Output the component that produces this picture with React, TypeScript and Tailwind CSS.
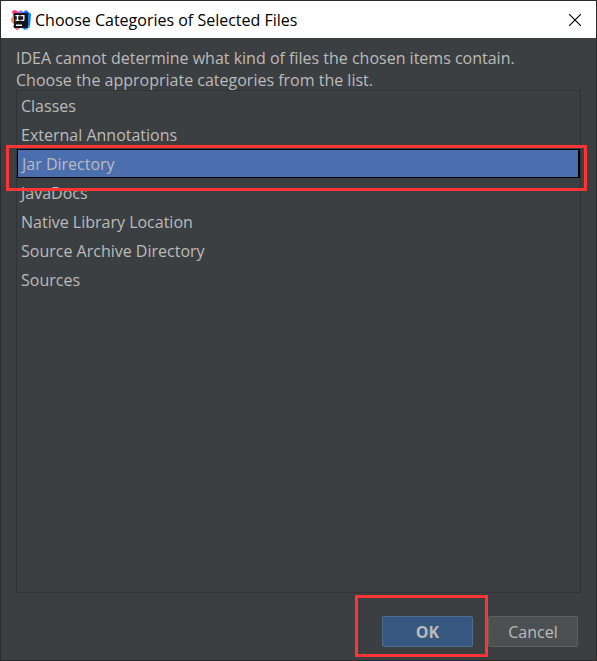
import { useState } from "react";

const categories = [
  "Classes",
  "External Annotations",
  "Jar Directory",
  "JavaDocs",
  "Native Library Location",
  "Source Archive Directory",
  "Sources",
];

function IdeaLogo() {
  return (
    <svg viewBox="0 0 20 20" className="size-5 shrink-0" aria-hidden="true">
      <path d="M1 1l3-1 6 3 1 14-5 3-4-3 1-3-3-4 2-4z" fill="#fe3d6a" />
      <path d="M0 9l3-2 1 7-3-1z" fill="#fb8a3c" />
      <path d="M2 16l3-1 5 2-4 3z" fill="#fb6f7a" />
      <path d="M5 3l5-3 3 3v2H5z" fill="#b06af0" />
      <path d="M11 3l4-3 5 4-1 12-5 4-4-3z" fill="#087cfa" />
      <path d="M14 17l5-2v2l-4 3z" fill="#3fa9f8" />
      <path d="M3 3h14v15H3z" fill="#17171b" />
      <path d="M4.500 5h4v1.200H7.200v3.600h1.300V11h-4V9.800h1.300V6.200H4.500zM9.500 5h4v4.500q0 1.500-1.600 1.500H9.500V9.800h2.200q.5 0 .5-.5V6.200H9.500z" fill="#fff" />
      <path d="M5 14.500h6V16H5z" fill="#fff" />
    </svg>
  );
}

function TitleBar() {
  return (
    <header className="flex h-[37px] items-center gap-1 bg-white pr-[11px] pl-[10px] text-black">
      <IdeaLogo />
      <h1 className="flex-1 text-base">Choose Categories of Selected Files</h1>
      <button type="button" aria-label="Close" className="flex size-5 items-center justify-center">
        <svg viewBox="0 0 12 12" className="size-3" aria-hidden="true">
          <path d="M0 0l12 12M12 0L0 12" stroke="#000" strokeWidth="1.100" fill="none" />
        </svg>
      </button>
    </header>
  );
}

export default function App() {
  const [selected, setSelected] = useState("Jar Directory");

  return (
    <div className="flex min-h-screen flex-col border border-[#2b2b2b] bg-[#3c3f41] font-['Open_Sans','Noto_Sans',sans-serif] text-base text-[#bbbbbb]">
      <TitleBar />
      <main className="flex flex-1 flex-col px-[15px] pt-[9px]">
        <p id="prompt" className="h-[43px] leading-[22px]">
          IDEA cannot determine what kind of files the chosen items contain.
          <br />
          Choose the appropriate categories from the list.
        </p>
        <ul role="listbox" aria-labelledby="prompt" className="flex-1 border border-[#323232]">
          {categories.map((name) => (
            <li
              key={name}
              role="option"
              aria-selected={name === selected}
              onClick={() => setSelected(name)}
              className={
                name === selected
                  ? "relative flex h-[29px] items-center border border-r-2 border-black bg-[#4b6eaf] pl-1"
                  : "flex h-[29px] items-center pl-1"
              }
            >
              {name}
              {name === selected && (
                <span className="pointer-events-none absolute -top-[5px] -right-[9px] -bottom-[14px] -left-3 border-3 border-[#ff3535]" />
              )}
            </li>
          ))}
        </ul>
      </main>
      <footer className="flex justify-end gap-[15px] px-[18px] pt-[23px] pb-[13px]">
        <div className="relative">
          <button type="button" className="h-[31px] w-[91px] rounded-xs border border-[#4c708c] bg-[#365880] font-bold">
            OK
          </button>
          <span className="pointer-events-none absolute -top-[21px] -right-[15px] -bottom-[10px] -left-[27px] z-10 border-3 border-[#ff3535]" />
        </div>
        <button type="button" className="h-[31px] w-[90px] rounded-xs border border-[#5e6060] bg-[#4c5052]">
          Cancel
        </button>
      </footer>
    </div>
  );
}
